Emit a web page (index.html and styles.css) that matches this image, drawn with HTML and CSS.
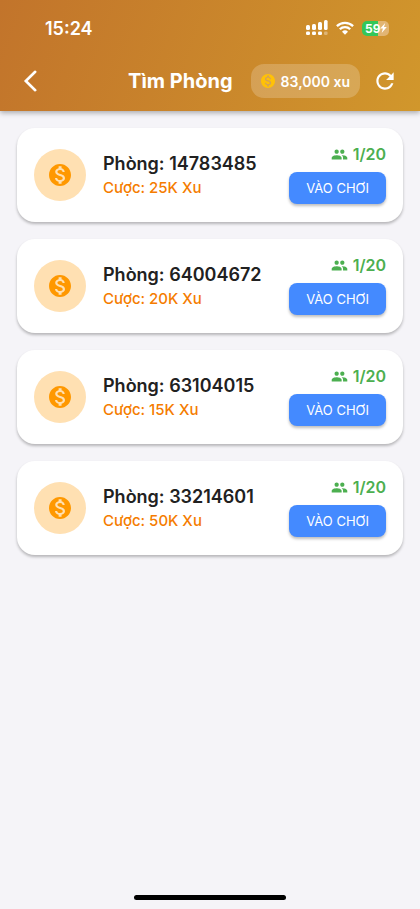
FILE: index.html
```html
<!DOCTYPE html>
<html lang="vi">
<head>
<meta charset="utf-8">
<meta name="viewport" content="width=device-width, initial-scale=1">
<title>Tìm Phòng</title>
<link rel="stylesheet" href="styles.css">
</head>
<body>
<svg class="defs" aria-hidden="true">
  <symbol id="coin" viewBox="2 2 20 20"><path fill="currentColor" d="M12 2C6.48 2 2 6.48 2 12s4.48 10 10 10 10-4.48 10-10S17.52 2 12 2zm1.41 16.09V20h-2.67v-1.93c-1.71-.36-3.16-1.46-3.27-3.4h1.96c.1 1.05.82 1.87 2.65 1.87 1.96 0 2.4-.98 2.4-1.59 0-.83-.44-1.61-2.67-2.14-2.48-.6-4.18-1.62-4.18-3.67 0-1.72 1.39-2.84 3.11-3.21V4h2.67v1.95c1.86.45 2.79 1.86 2.85 3.39H14.3c-.05-1.11-.64-1.87-2.22-1.87-1.5 0-2.4.68-2.4 1.64 0 .84.65 1.39 2.67 1.91s4.18 1.39 4.18 3.91c-.01 1.83-1.38 2.83-3.12 3.16z"/></symbol>
  <symbol id="people" viewBox="0 0 24 24"><path fill="currentColor" d="M16 11c1.66 0 2.99-1.34 2.99-3S17.66 5 16 5c-1.66 0-3 1.34-3 3s1.34 3 3 3zm-8 0c1.66 0 2.99-1.34 2.99-3S9.66 5 8 5C6.34 5 5 6.34 5 8s1.34 3 3 3zm0 2c-2.33 0-7 1.17-7 3.5V19h14v-2.5c0-2.33-4.67-3.5-7-3.5zm8 0c-.29 0-.62.02-.97.05 1.16.84 1.97 1.97 1.97 3.45V19h6v-2.5c0-2.33-4.67-3.5-7-3.5z"/></symbol>
</svg>
<header class="header">
  <div class="status">
    <span class="time">15:24</span>
    <div class="indicators">
      <svg class="signal" viewBox="0 0 22 16" fill="currentColor" aria-hidden="true">
        <rect x="0" y="5" width="4" height="5" rx="1.5"/><rect x="6" y="4" width="4" height="6" rx="1.5"/><rect x="12" y="2" width="4" height="8" rx="1.5"/><rect x="18" y="0" width="3.6" height="10" rx="1.5"/>
        <rect x="0" y="11.5" width="4" height="3.5" rx="1.2"/><rect x="6" y="11.5" width="4" height="3.5" rx="1.2"/><rect x="12" y="11.5" width="4" height="3.5" rx="1.2"/><rect x="18" y="11.5" width="3.6" height="3.5" rx="1.2" opacity=".35"/>
      </svg>
      <svg class="wifi" viewBox="0 0 18 14" fill="none" stroke="currentColor" stroke-width="2.3" aria-hidden="true">
        <path d="M.9 5.1a11.6 11.6 0 0 1 16.2 0M3.8 8.3a7.4 7.4 0 0 1 10.4 0"/><path fill="currentColor" stroke="none" d="M9 13.7 6 10.8a4.3 4.3 0 0 1 6 0z"/>
      </svg>
      <span class="battery"><span class="level">59</span><svg class="bolt" viewBox="0 0 7 10" aria-hidden="true"><path fill="currentColor" d="M5.2 0 .2 5.6h2.7L1.7 10l5.1-5.9H4z"/></svg></span>
    </div>
  </div>
  <nav class="bar">
    <button class="icon-button" type="button" aria-label="Quay lại"><svg class="back" viewBox="0 0 14 22" fill="none" stroke="currentColor" stroke-width="2.6" stroke-linecap="round" aria-hidden="true"><path d="M12.2 1.8 2.8 11l9.4 9.2"/></svg></button>
    <h1 class="title">Tìm Phòng</h1>
    <div class="balance"><svg class="balance-coin" aria-hidden="true"><use href="#coin"/></svg><span>83,000 xu</span></div>
    <button class="icon-button" type="button" aria-label="Làm mới"><svg class="refresh" viewBox="0 0 24 24" aria-hidden="true"><path fill="currentColor" d="M17.65 6.35C16.2 4.9 14.21 4 12 4c-4.42 0-7.99 3.58-7.99 8s3.57 8 7.99 8c3.73 0 6.84-2.55 7.73-6h-2.08c-.82 2.33-3.04 4-5.65 4-3.31 0-6-2.69-6-6s2.69-6 6-6c1.66 0 3.14.69 4.22 1.78L13 11h7V4l-2.35 2.35z"/></svg></button>
  </nav>
</header>
<main class="rooms">
  <article class="room">
    <div class="avatar"><svg class="coin" aria-hidden="true"><use href="#coin"/></svg></div>
    <div class="info"><h2 class="name">Phòng: 14783485</h2><p class="bet">Cược: 25K Xu</p></div>
    <div class="side"><span class="count"><svg class="people" aria-hidden="true"><use href="#people"/></svg>1/20</span><button class="join" type="button">VÀO CHƠI</button></div>
  </article>
  <article class="room">
    <div class="avatar"><svg class="coin" aria-hidden="true"><use href="#coin"/></svg></div>
    <div class="info"><h2 class="name">Phòng: 64004672</h2><p class="bet">Cược: 20K Xu</p></div>
    <div class="side"><span class="count"><svg class="people" aria-hidden="true"><use href="#people"/></svg>1/20</span><button class="join" type="button">VÀO CHƠI</button></div>
  </article>
  <article class="room">
    <div class="avatar"><svg class="coin" aria-hidden="true"><use href="#coin"/></svg></div>
    <div class="info"><h2 class="name">Phòng: 63104015</h2><p class="bet">Cược: 15K Xu</p></div>
    <div class="side"><span class="count"><svg class="people" aria-hidden="true"><use href="#people"/></svg>1/20</span><button class="join" type="button">VÀO CHƠI</button></div>
  </article>
  <article class="room">
    <div class="avatar"><svg class="coin" aria-hidden="true"><use href="#coin"/></svg></div>
    <div class="info"><h2 class="name">Phòng: 33214601</h2><p class="bet">Cược: 50K Xu</p></div>
    <div class="side"><span class="count"><svg class="people" aria-hidden="true"><use href="#people"/></svg>1/20</span><button class="join" type="button">VÀO CHƠI</button></div>
  </article>
</main>
<footer class="home"><div class="home-bar"></div></footer>
</body>
</html>
```
FILE: styles.css
```css
* { box-sizing: border-box; }

body {
  margin: 0;
  min-height: 100vh;
  display: flex;
  flex-direction: column;
  background: #f5f4f8;
  color: #212121;
  font-family: Inter, "Liberation Sans", sans-serif;
}

h1, h2, p { margin: 0; }
button { border: 0; padding: 0; font-family: inherit; color: inherit; }
svg { display: block; flex: none; }
.defs { position: absolute; width: 0; height: 0; }

.header {
  color: #fff;
  background: linear-gradient(110deg, #c2742b, #d1972c);
  box-shadow: 0 2px 5px rgba(0, 0, 0, 0.3);
}

.status {
  height: 51px;
  padding: 5px 31px 0 45px;
  display: flex;
  align-items: center;
  justify-content: space-between;
}
.time { font-size: 18px; font-weight: 600; }
.indicators { display: flex; align-items: center; gap: 8px; }
.signal { width: 22px; height: 16px; }
.wifi { width: 18px; height: 14px; }
.battery {
  width: 27px;
  height: 15px;
  padding: 0 1px 0 3px;
  display: flex;
  align-items: center;
  border-radius: 5px;
  background: linear-gradient(90deg, #34c759 59%, #e2b573 59%);
}
.level { font-size: 12px; line-height: 15px; font-weight: 700; }
.bolt { width: 7px; height: 10px; }

.bar {
  height: 60px;
  padding: 0 10px;
  display: flex;
  align-items: center;
}
.icon-button {
  width: 48px;
  height: 48px;
  display: grid;
  place-items: center;
  flex: none;
  background: none;
}
.icon-button:first-child { width: 40px; }
.icon-button:last-child { width: 50px; }
.back { width: 14px; height: 22px; }
.refresh { width: 26px; height: 26px; }
.title {
  flex: 1;
  text-align: right;
  padding-right: 18px;
  font-size: 20px;
  line-height: 28px;
  font-weight: 700;
}
.balance {
  height: 34px;
  padding: 0 10px;
  display: flex;
  align-items: center;
  gap: 6px;
  border-radius: 13px;
  background: rgba(255, 255, 255, 0.2);
  font-size: 14px;
  font-weight: 600;
}
.balance-coin { width: 14px; height: 14px; color: #ffc107; }

.rooms {
  flex: 1;
  padding: 17px;
  display: flex;
  flex-direction: column;
  gap: 17px;
}
.room {
  min-height: 94px;
  padding: 0 17px;
  display: flex;
  align-items: center;
  gap: 17px;
  border-radius: 18px;
  background: #fff;
  box-shadow: 0 2px 3px rgba(0, 0, 0, 0.26);
}
.avatar {
  width: 52px;
  height: 52px;
  display: grid;
  place-items: center;
  flex: none;
  border-radius: 50%;
  background: #ffe0b2;
}
.coin { width: 22px; height: 22px; color: #ff9800; }
.info { flex: 1; padding-top: 2px; }
.name { font-size: 18px; line-height: 24px; font-weight: 600; }
.bet { font-size: 15px; line-height: 24px; font-weight: 500; color: #f57c00; }
.side {
  display: flex;
  flex-direction: column;
  align-items: flex-end;
  gap: 8px;
  padding-bottom: 2px;
}
.count {
  display: flex;
  align-items: center;
  gap: 5px;
  font-size: 16px;
  line-height: 20px;
  font-weight: 600;
  color: #4caf50;
}
.people { width: 17px; height: 17px; }
.join {
  height: 32px;
  padding: 0 17px;
  border-radius: 8px;
  background: #448aff;
  color: #fff;
  font-size: 13px;
  box-shadow: 0 2px 3px rgba(0, 0, 0, 0.26);
}

.home { padding-bottom: 9px; }
.home-bar {
  width: 36%;
  height: 5px;
  margin: 0 auto;
  border-radius: 3px;
  background: #000;
}
```
